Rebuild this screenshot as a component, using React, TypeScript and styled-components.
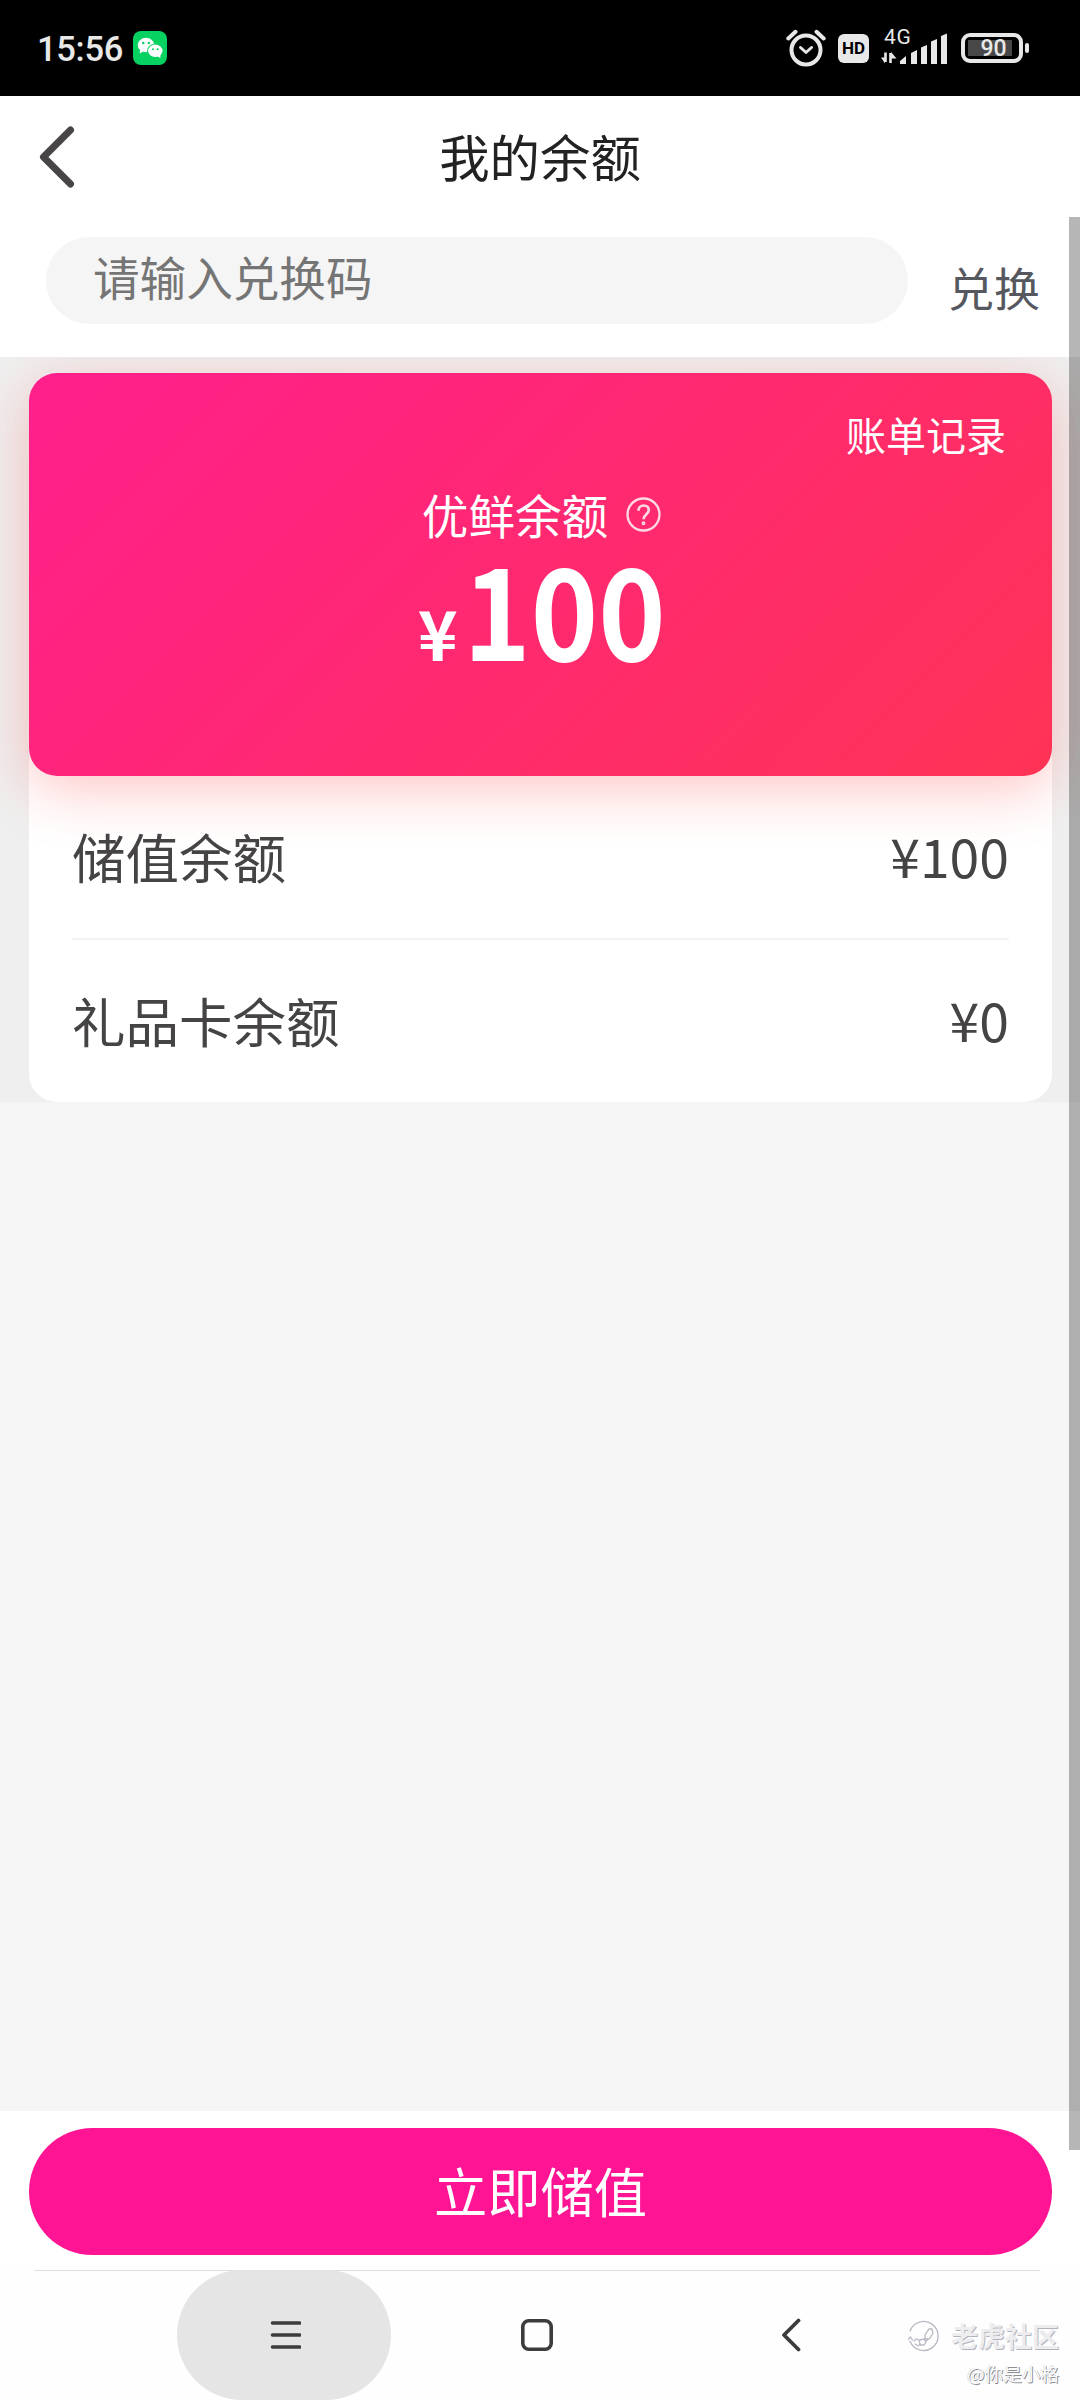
import React from "react";
import styled, { createGlobalStyle } from "styled-components";

const GlobalStyle = createGlobalStyle`
  * { box-sizing: border-box; }
  body { margin: 0; background: #f5f5f5; }
  button, input { font: inherit; border: 0; background: none; margin: 0; padding: 0; }
`;

const Screen = styled.div`
  position: relative;
  display: flex;
  flex-direction: column;
  width: 1080px;
  height: 2400px;
  overflow: hidden;
  background: #f5f5f5;
  font-family: "Noto Sans CJK SC", "Noto Sans", sans-serif;
`;

/* ---------- status bar ---------- */

const StatusBar = styled.header`
  display: flex;
  justify-content: space-between;
  flex: none;
  height: 96px;
  padding: 0 51px 0 37px;
  background: #000;
  color: #e8e8e8;
  font-family: Roboto, "Liberation Sans", sans-serif;
`;

const StatusLeft = styled.div`
  display: flex;
  align-items: center;
  gap: 9px;
`;

const Clock = styled.span`
  width: 87px;
  font-size: 34.5px;
  font-weight: 500;
  line-height: 40px;
  letter-spacing: -0.3px;
  white-space: nowrap;
  padding-top: 2px;
`;

const StatusRight = styled.div`
  display: flex;
  align-items: center;
`;

const HdBadge = styled.span`
  display: flex;
  align-items: center;
  justify-content: center;
  width: 31px;
  height: 29px;
  margin: 0 12px 0 12px;
  border-radius: 6px;
  background: #e8e8e8;
  color: #000;
  font-size: 17px;
  font-weight: 700;
`;

const Network = styled.div`
  display: flex;
  flex-direction: column;
  width: 68px;
  height: 38px;
`;

const NetworkLabel = styled.span`
  height: 14px;
  padding-left: 3px;
  font-size: 21px;
  line-height: 16px;
  letter-spacing: 0.8px;
`;

const Battery = styled.div`
  display: flex;
  align-items: center;
  justify-content: center;
  width: 62px;
  height: 30px;
  margin-left: 12px;
  border: 4px solid #e8e8e8;
  border-radius: 9px;
  background: linear-gradient(#484848, #484848) 3px 3px / 44px 16px no-repeat;
  font-size: 23px;
  font-weight: 500;
  line-height: 22px;
  padding-left: 3px;
  padding-top: 1px;
`;

const BatteryCap = styled.span`
  width: 4px;
  height: 10px;
  margin-left: 2px;
  border-radius: 2px;
  background: #e8e8e8;
`;

/* ---------- title and redeem form ---------- */

const NavBar = styled.nav`
  display: grid;
  grid-template-columns: 120px 1fr 120px;
  align-items: center;
  flex: none;
  height: 121px;
  background: #fff;
`;

const BackButton = styled.button`
  display: flex;
  padding-left: 38px;
  color: #484546;
`;

const Title = styled.h1`
  margin: 0;
  padding-bottom: 1px;
  text-align: center;
  font-size: 50.4px;
  font-weight: 400;
  line-height: 60px;
  color: #222;
`;

const RedeemForm = styled.div`
  display: flex;
  flex: none;
  height: 140px;
  padding: 20px 40px 0 46px;
  background: #fff;
`;

const CodeInput = styled.input`
  width: 862px;
  height: 87px;
  padding: 0 47px 11px;
  border-radius: 44px;
  background: #f5f5f5;
  font-size: 46.6px;
  outline: none;
  &::placeholder {
    color: #757575;
    opacity: 1;
  }
`;

const RedeemButton = styled.button`
  height: 98px;
  margin-left: auto;
  font-size: 46px;
  line-height: 98px;
  color: #55585e;
`;

/* ---------- balances ---------- */

const BalanceSection = styled.section`
  flex: none;
  height: 745px;
  padding: 16px 28px 0 29px;
  overflow: hidden;
  background: #efefef;
`;

const BalancePanel = styled.div`
  border-radius: 28px;
  background: #fff;
`;

const HeroCard = styled.div`
  display: flex;
  flex-direction: column;
  align-items: center;
  height: 403px;
  padding: 41px 46px 0;
  border-radius: 28px;
  background: linear-gradient(135deg, #ff1f8c 0%, #ff3355 100%);
  box-shadow: 0 14px 56px rgba(255, 51, 51, 0.28);
  color: #fff;
`;

const HistoryLink = styled.a`
  align-self: flex-end;
  font-size: 40px;
  line-height: 40px;
`;

const HeroLabel = styled.div`
  display: flex;
  align-items: center;
  gap: 18px;
  height: 48px;
  margin-top: 36px;
  padding-left: 2px;
  font-size: 46.6px;
  line-height: 48px;
`;

const HeroAmount = styled.div`
  display: flex;
  align-items: baseline;
  gap: 8px;
  margin-top: 12px;
  padding-left: 5px;
  font-size: 127px;
  font-weight: 700;
  line-height: 112px;
  transform: scaleX(0.9);
`;

const Currency = styled.span`
  font-size: 69px;
  line-height: 1;
  transform: scaleX(1.09);
`;

const Row = styled.div`
  display: flex;
  align-items: center;
  justify-content: space-between;
  height: 162px;
  margin: 0 43px;
  padding-bottom: 3px;
  font-size: 53.5px;
  line-height: 60px;
  color: #454344;
`;

const RowAmount = styled.span`
  padding-bottom: 2px;
`;

const Divider = styled.hr`
  height: 2px;
  margin: 0 43px;
  border: 0;
  background: #f4f4f4;
`;

const Spacer = styled.div`
  flex: 1;
`;

/* ---------- footer ---------- */

const ActionBar = styled.div`
  flex: none;
  height: 159px;
  padding: 17px 28px 0 29px;
  background: #fff;
`;

const TopUpButton = styled.button`
  display: block;
  width: 100%;
  height: 127px;
  padding-bottom: 4px;
  border-radius: 64px;
  background: #ff1493;
  color: #fff;
  font-size: 53.3px;
  line-height: 60px;
`;

const SystemNav = styled.footer`
  display: flex;
  align-items: center;
  flex: none;
  height: 130px;
  padding-left: 177px;
  background: linear-gradient(#dedede, #dedede) 34px 0 / 1006px 1px no-repeat #fefefe;
  color: #3c3c3c;
`;

const NavKey = styled.button<{ $width: number; $pressed?: boolean }>`
  display: flex;
  align-items: center;
  justify-content: center;
  flex: none;
  width: ${(p) => p.$width}px;
  height: 130px;
  border-radius: 65px;
  color: inherit;
  background: ${(p) => (p.$pressed ? "#e5e5e5" : "transparent")};
`;

const Watermark = styled.div`
  display: flex;
  flex-direction: column;
  align-items: flex-end;
  margin-left: auto;
  padding: 37px 21px 0 0;
  color: #fdfdfd;
`;

const WatermarkBrand = styled.div`
  display: flex;
  align-items: center;
  gap: 12px;
  height: 36px;
  font-size: 27px;
  font-weight: 700;
  line-height: 36px;
  color: #ededf0;
  text-shadow: 1px 1px 0.5px #b2b3bd;
`;

const WatermarkUser = styled.div`
  margin-top: 3px;
  font-size: 18.6px;
  line-height: 32px;
  text-shadow: 1px 1px 0.5px #8d8f96, -0.5px -0.5px 0.5px #c9cad2;
`;

const ScrollThumb = styled.div`
  position: absolute;
  top: 217px;
  right: 0;
  width: 11px;
  height: 1933px;
  background: rgba(0, 0, 0, 0.285);
`;

/* ---------- icons ---------- */

const WeChatIcon = () => (
  <svg width="34" height="34" viewBox="0 0 34 34">
    <rect width="34" height="34" rx="8" fill="#07d160" />
    <path d="M7 18l-.3 4.500 4.300-2.500z" fill="#fff" />
    <ellipse cx="13" cy="14" rx="8.300" ry="7.200" fill="#fff" />
    <ellipse cx="22.300" cy="19.800" rx="8.200" ry="7.100" fill="#07d160" />
    <ellipse cx="22.300" cy="19.800" rx="7.200" ry="6.200" fill="#fff" />
    <path d="M24 25l3.300 2 .2-4.500z" fill="#fff" />
    <g fill="#07d160">
      <circle cx="10.300" cy="12" r="1.200" />
      <circle cx="15.800" cy="12" r="1.200" />
      <circle cx="20" cy="18.300" r="1" />
      <circle cx="24.700" cy="18.300" r="1" />
    </g>
  </svg>
);

const AlarmIcon = () => (
  <svg width="40" height="38" viewBox="0 0 40 38" fill="none" stroke="#e8e8e8">
    <circle cx="20" cy="21" r="14.500" strokeWidth="4" />
    <path d="M2.300 9.500L9.500 2.800M37.700 9.500L30.500 2.800" strokeWidth="4" strokeLinecap="round" />
    <path d="M14.500 18.500l5.500 5 5.500-5" strokeWidth="3" strokeLinecap="round" strokeLinejoin="round" />
  </svg>
);

const SignalSvg = styled.svg`
  flex: none;
  margin-top: -10px;
`;

const SignalIcon = () => (
  <SignalSvg width="68" height="32" viewBox="0 0 68 32" fill="#e8e8e8">
    <path d="M4.500 19.500v9.500M9.500 30v-10" stroke="#e8e8e8" strokeWidth="2.600" />
    <path d="M0 24.500h4v6zM10 19l5.500 6.500H10z" />
    <path d="M19 31v-3l6-5v8zM30 31V20l6-3v14zM40 31V14.500l6-2.500v19zM50 31V8.500l6-2.500v25zM60 31V3l6-2.500V31z" />
  </SignalSvg>
);

const HelpIcon = () => (
  <svg width="35" height="35" viewBox="0 0 35 35" fill="none" stroke="#fff" strokeOpacity=".82" strokeWidth="2.300">
    <circle cx="17.500" cy="17.500" r="16" />
    <path d="M12.500 13.700c0-3.200 2.100-5.200 5.200-5.200s5.100 1.900 5.100 4.600c0 4-5.300 4.300-5.300 9.200" strokeWidth="2.700" />
    <circle cx="17.500" cy="26.200" r=".8" />
  </svg>
);

const TigerLogo = () => (
  <svg width="32" height="32" viewBox="0 0 32 32" fill="none" stroke="#b9bac4" strokeWidth="1.300" strokeLinecap="round">
    <path d="M3 11a14.500 14.500 0 1 1 0 10" />
    <path d="M1.500 19l2-2 2 3M7 21l2-2 3 1 1 4M13 20l4-1 2 3-2 3-5 0M19 21l4-3 3-5-1-4-3 0-4 6 0 4 3 0M8 24l3 2" />
  </svg>
);

export default function App() {
  return (
    <Screen>
      <GlobalStyle />
      <StatusBar>
        <StatusLeft>
          <Clock>15:56</Clock>
          <WeChatIcon />
        </StatusLeft>
        <StatusRight>
          <AlarmIcon />
          <HdBadge>HD</HdBadge>
          <Network>
            <NetworkLabel>4G</NetworkLabel>
            <SignalIcon />
          </Network>
          <Battery>90</Battery>
          <BatteryCap />
        </StatusRight>
      </StatusBar>

      <NavBar>
        <BackButton aria-label="返回">
          <svg width="38" height="64" viewBox="0 0 38 64" fill="none" stroke="currentColor" strokeWidth="7" strokeLinecap="round" strokeLinejoin="round">
            <path d="M32.500 5L5.500 32l27 27" />
          </svg>
        </BackButton>
        <Title>我的余额</Title>
      </NavBar>

      <RedeemForm>
        <CodeInput placeholder="请输入兑换码" />
        <RedeemButton>兑换</RedeemButton>
      </RedeemForm>

      <BalanceSection>
        <BalancePanel>
          <HeroCard>
            <HistoryLink>账单记录</HistoryLink>
            <HeroLabel>
              优鲜余额
              <HelpIcon />
            </HeroLabel>
            <HeroAmount>
              <Currency>¥</Currency>
              <span>100</span>
            </HeroAmount>
          </HeroCard>
          <Row>
            <span>储值余额</span>
            <RowAmount>¥100</RowAmount>
          </Row>
          <Divider />
          <Row>
            <span>礼品卡余额</span>
            <RowAmount>¥0</RowAmount>
          </Row>
        </BalancePanel>
      </BalanceSection>

      <Spacer />

      <ActionBar>
        <TopUpButton>立即储值</TopUpButton>
      </ActionBar>

      <SystemNav>
        <NavKey $width={214} $pressed aria-label="菜单">
          <svg width="34" height="30" viewBox="0 0 34 30" stroke="currentColor" strokeWidth="3.600" strokeLinecap="round">
            <path d="M5.500 3h27M5.500 15h27M5.500 27h27" />
          </svg>
        </NavKey>
        <NavKey $width={292} aria-label="主页">
          <svg width="32" height="32" viewBox="0 0 32 32" fill="none" stroke="currentColor" strokeWidth="3.600">
            <rect x="1.800" y="1.800" width="28.400" height="28.400" rx="6" />
          </svg>
        </NavKey>
        <NavKey $width={216} aria-label="返回">
          <svg width="20" height="34" viewBox="0 0 20 34" fill="none" stroke="currentColor" strokeWidth="3.800" strokeLinecap="round" strokeLinejoin="round">
            <path d="M17.500 2.500L3 17l14.500 14.500" />
          </svg>
        </NavKey>
        <Watermark>
          <WatermarkBrand>
            <TigerLogo />
            老虎社区
          </WatermarkBrand>
          <WatermarkUser>@你是小格</WatermarkUser>
        </Watermark>
      </SystemNav>

      <ScrollThumb />
    </Screen>
  );
}
